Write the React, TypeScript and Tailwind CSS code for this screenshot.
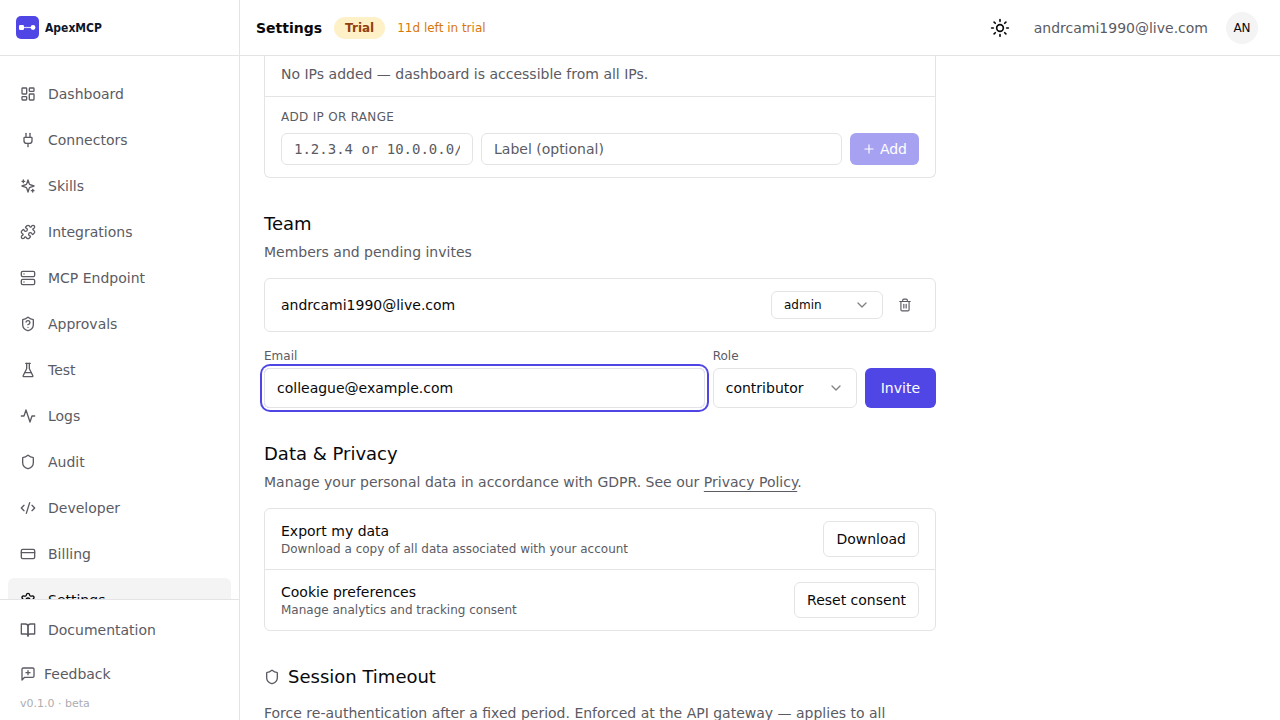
import React, { useState } from "react";
import {
  ChevronDown,
  CodeXml,
  CreditCard,
  LayoutDashboard,
  Plug,
  Plus,
  Puzzle,
  Server,
  Settings,
  Shield,
  ShieldQuestionMark,
  Sun,
  Trash2,
} from "lucide-react";

type IconProps = { className?: string };

interface NavItem {
  label: string;
  icon: React.ComponentType<IconProps>;
}

// wraps the few glyphs that lucide draws differently
const makeIcon = (...paths: string[]) => ({ className }: IconProps) => (
  <svg
    className={className}
    viewBox="0 0 24 24"
    fill="none"
    stroke="currentColor"
    strokeWidth="2"
    strokeLinecap="round"
    strokeLinejoin="round"
    aria-hidden="true"
  >
    {paths.map((d) => (
      <path key={d} d={d} />
    ))}
  </svg>
);

const SparklesIcon = makeIcon(
  "m12 3-1.912 5.813a2 2 0 0 1-1.275 1.275L3 12l5.813 1.912a2 2 0 0 1 1.275 1.275L12 21l1.912-5.813a2 2 0 0 1 1.275-1.275L21 12l-5.813-1.912a2 2 0 0 1-1.275-1.275L12 3Z",
  "M5 3v4",
  "M19 17v4",
  "M3 5h4",
  "M17 19h4"
);
const FlaskIcon = makeIcon(
  "M10 2v7.527a2 2 0 0 1-.211.896L4.72 20.55a1 1 0 0 0 .9 1.45h12.76a1 1 0 0 0 .9-1.45l-5.069-10.127A2 2 0 0 1 14 9.527V2",
  "M8.5 2h7",
  "M7 16h10"
);
const PulseIcon = makeIcon("M22 12h-4l-3 9L9 3l-3 9H2");
const BookIcon = makeIcon(
  "M2 3h6a4 4 0 0 1 4 4v14a3 3 0 0 0-3-3H2z",
  "M22 3h-6a4 4 0 0 0-4 4v14a3 3 0 0 1 3-3h7z"
);
const FeedbackIcon = makeIcon(
  "M21 15a2 2 0 0 1-2 2H7l-4 4V5a2 2 0 0 1 2-2h14a2 2 0 0 1 2 2z",
  "M12 7v6",
  "M9 10h6"
);

const navItems: NavItem[] = [
  { label: "Dashboard", icon: LayoutDashboard },
  { label: "Connectors", icon: Plug },
  { label: "Skills", icon: SparklesIcon },
  { label: "Integrations", icon: Puzzle },
  { label: "MCP Endpoint", icon: Server },
  { label: "Approvals", icon: ShieldQuestionMark },
  { label: "Test", icon: FlaskIcon },
  { label: "Logs", icon: PulseIcon },
  { label: "Audit", icon: Shield },
  { label: "Developer", icon: CodeXml },
  { label: "Billing", icon: CreditCard },
  { label: "Settings", icon: Settings },
];

const Logo = () => (
  <a href="#" className="flex items-center gap-1.5">
    <svg className="size-[23px]" viewBox="0 0 23 23" aria-hidden="true">
      <rect width="23" height="23" rx="5" fill="#4f46e5" />
      <path d="M5 11.5h13" stroke="#fff" strokeOpacity="0.8" strokeWidth="1.2" />
      <rect x="3" y="9" width="5" height="5" rx="1.2" fill="#fff" />
      <circle cx="17" cy="11.5" r="2.4" fill="#fff" />
    </svg>
    <span className="font-['DejaVu_Sans_Condensed','DejaVu_Sans',sans-serif] text-xs font-bold text-[#0f172a]">
      ApexMCP
    </span>
  </a>
);

const Sidebar = () => {
  const active = "Settings";

  return (
    <aside className="flex w-60 shrink-0 flex-col border-r border-[#e4e4e7]">
      <div className="flex h-14 shrink-0 items-center border-b border-[#e4e4e7] px-4">
        <Logo />
      </div>
      <nav className="min-h-0 flex-1 overflow-y-auto px-2 py-4 [scrollbar-width:none]">
        <ul className="flex flex-col gap-0.5">
          {navItems.map(({ label, icon: Icon }) => (
            <li key={label}>
              <a
                href="#"
                aria-current={label === active ? "page" : undefined}
                className={`flex h-11 items-center gap-3 rounded-md px-3 ${
                  label === active ? "bg-[#f4f4f5] text-[#09090b]" : "text-[#5b5b63]"
                }`}
              >
                <Icon className="size-4 shrink-0" />
                {label}
              </a>
            </li>
          ))}
        </ul>
      </nav>
      <div className="shrink-0 border-t border-[#e4e4e7] p-2 text-[#5b5b63]">
        <a href="#" className="flex h-11 items-center gap-3 rounded-md px-3">
          <BookIcon className="size-4 shrink-0" />
          Documentation
        </a>
        <button type="button" className="flex h-11 w-full items-center gap-2 rounded-md px-3">
          <FeedbackIcon className="size-4 shrink-0" />
          Feedback
        </button>
        <p className="px-3 text-[11px] leading-4 text-[#adadb1]">v0.1.0 · beta</p>
      </div>
    </aside>
  );
};

const Topbar = () => (
  <header className="flex h-14 shrink-0 items-center justify-between border-b border-[#e4e4e7] px-4">
    <div className="flex items-center gap-3">
      <h1 className="font-semibold">Settings</h1>
      <span className="rounded-full border border-transparent bg-[#fef0c7] px-2.5 py-0.5 text-xs font-semibold text-[#92400e]">
        Trial
      </span>
      <span className="text-xs text-[#d97706]">11d left in trial</span>
    </div>
    <div className="flex items-center gap-3">
      <button type="button" aria-label="Toggle theme" className="flex size-11 items-center justify-center">
        <Sun className="size-5" />
      </button>
      <span className="text-[#5b5b63]">andrcami1990@live.com</span>
      <button type="button" className="flex size-11 items-center justify-center">
        <span className="flex size-8 items-center justify-center rounded-full bg-[#f4f4f5] text-xs font-medium">
          AN
        </span>
      </button>
    </div>
  </header>
);

const IpAllowlist = () => {
  const [ip, setIp] = useState("");
  const [label, setLabel] = useState("");

  return (
    <section className="rounded-b-md border border-t-0 border-[#e4e4e7]">
      <p className="px-4 pt-2 pb-3 text-[#5b5b63]">No IPs added — dashboard is accessible from all IPs.</p>
      <form className="border-t border-[#e4e4e7] px-4 py-3" onSubmit={(e) => e.preventDefault()}>
        <label htmlFor="ip" className="block text-xs tracking-wide text-[#5b5b63] uppercase">
          Add IP or range
        </label>
        <div className="mt-2 flex gap-2">
          <input
            id="ip"
            value={ip}
            onChange={(e) => setIp(e.target.value)}
            placeholder="1.2.3.4 or 10.0.0.0/8"
            className="h-8 w-48 rounded-md border border-[#e4e4e7] px-3 font-['DejaVu_Sans_Mono',monospace] placeholder:text-[#5b5b63]"
          />
          <input
            aria-label="Label"
            value={label}
            onChange={(e) => setLabel(e.target.value)}
            placeholder="Label (optional)"
            className="h-8 min-w-0 flex-1 rounded-md border border-[#e4e4e7] px-3 placeholder:text-[#5b5b63]"
          />
          <button
            type="submit"
            disabled={!ip}
            className="flex h-8 items-center gap-1 rounded-md bg-[#4f46e5] px-3 text-white disabled:opacity-50"
          >
            <Plus className="size-3.5" />
            Add
          </button>
        </div>
      </form>
    </section>
  );
};

const Team = () => {
  const [memberRole, setMemberRole] = useState("admin");
  const [email, setEmail] = useState("colleague@example.com");
  const [role, setRole] = useState("contributor");

  return (
    <section>
      <h2 className="text-lg leading-7 font-medium">Team</h2>
      <p className="mt-1 text-[#5b5b63]">Members and pending invites</p>
      <div className="mt-4 flex items-center justify-between rounded-md border border-[#e4e4e7] px-4 py-3">
        <span>andrcami1990@live.com</span>
        <div className="flex items-center gap-2">
          <div className="relative">
            <select
              aria-label="Member role"
              value={memberRole}
              onChange={(e) => setMemberRole(e.target.value)}
              className="h-7 w-28 appearance-none rounded-md border border-[#e4e4e7] px-3 text-xs"
            >
              <option>admin</option>
              <option>contributor</option>
            </select>
            <ChevronDown className="pointer-events-none absolute inset-y-0 right-[13px] my-auto size-4 opacity-50" />
          </div>
          <button
            type="button"
            aria-label="Remove member"
            className="flex size-7 items-center justify-center text-[#5b5b63]"
          >
            <Trash2 className="size-3.5" />
          </button>
        </div>
      </div>
      <form className="mt-4 flex items-end gap-2" onSubmit={(e) => e.preventDefault()}>
        <div className="flex min-w-0 flex-1 flex-col gap-1">
          <label htmlFor="email" className="text-xs text-[#5b5b63]">
            Email
          </label>
          <input
            id="email"
            type="email"
            value={email}
            onChange={(e) => setEmail(e.target.value)}
            className="h-10 rounded-md border border-[#e4e4e7] px-3 ring-2 ring-[#4f46e5] ring-offset-2 outline-none"
          />
        </div>
        <div className="flex w-36 flex-col gap-1">
          <label htmlFor="role" className="text-xs text-[#5b5b63]">
            Role
          </label>
          <div className="relative">
            <select
              id="role"
              value={role}
              onChange={(e) => setRole(e.target.value)}
              className="h-10 w-full appearance-none rounded-md border border-[#e4e4e7] px-3"
            >
              <option>contributor</option>
              <option>admin</option>
            </select>
            <ChevronDown className="pointer-events-none absolute inset-y-0 right-[13px] my-auto size-4 opacity-50" />
          </div>
        </div>
        <button type="submit" className="h-10 rounded-md bg-[#4f46e5] px-4 text-white">
          Invite
        </button>
      </form>
    </section>
  );
};

const privacyRows = [
  {
    title: "Export my data",
    text: "Download a copy of all data associated with your account",
    action: "Download",
  },
  {
    title: "Cookie preferences",
    text: "Manage analytics and tracking consent",
    action: "Reset consent",
  },
];

const DataPrivacy = () => (
  <section>
    <h2 className="text-lg leading-7 font-medium">Data &amp; Privacy</h2>
    <p className="mt-1 text-[#5b5b63]">
      Manage your personal data in accordance with GDPR. See our{" "}
      <a href="#" className="underline underline-offset-4">
        Privacy Policy
      </a>
      .
    </p>
    <ul className="mt-4 divide-y divide-[#e4e4e7] rounded-md border border-[#e4e4e7]">
      {privacyRows.map((row) => (
        <li key={row.title} className="flex items-center justify-between px-4 py-3">
          <div>
            <p>{row.title}</p>
            <p className="text-xs text-[#5b5b63]">{row.text}</p>
          </div>
          <button type="button" className="h-9 rounded-md border border-[#e4e4e7] px-3">
            {row.action}
          </button>
        </li>
      ))}
    </ul>
  </section>
);

const SessionTimeout = () => (
  <section>
    <h2 className="flex items-center gap-2 text-lg leading-7 font-medium">
      <Shield className="size-4 text-[#5b5b63]" />
      Session Timeout
    </h2>
    <p className="mt-3 text-[#5b5b63]">
      Force re-authentication after a fixed period. Enforced at the API gateway — applies to all
    </p>
  </section>
);

const App = () => {
  return (
    <div className="flex h-screen bg-white font-['DejaVu_Sans',sans-serif] text-sm text-[#09090b]">
      <Sidebar />
      <div className="flex min-w-0 flex-1 flex-col">
        <Topbar />
        <main className="min-h-0 flex-1 overflow-y-auto px-6 [scrollbar-width:none]">
          <div className="flex max-w-2xl flex-col gap-8">
            <IpAllowlist />
            <Team />
            <DataPrivacy />
            <SessionTimeout />
          </div>
        </main>
      </div>
    </div>
  );
};

export default App;
